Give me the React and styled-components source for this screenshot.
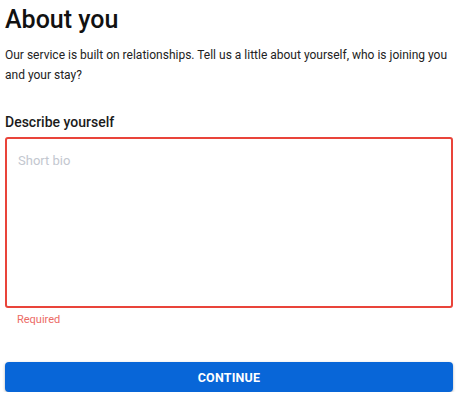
import styled, { createGlobalStyle } from 'styled-components';

const GlobalStyle = createGlobalStyle`
  body {
    margin: 0;
    background: #fff;
    font-family: Roboto, 'Liberation Sans', sans-serif;
  }
`;

function App() {
  return (
    <Wrapper>
      <GlobalStyle />
      <Title>About you</Title>
      <Intro>
        Our service is built on relationships. Tell us a little about yourself, who is joining you
        and your stay?
      </Intro>
      <Field>
        <Label htmlFor="bio">Describe yourself</Label>
        <Bio id="bio" placeholder="Short bio" invalid />
        <ErrorText>Required</ErrorText>
      </Field>
      <ContinueButton type="button">Continue</ContinueButton>
    </Wrapper>
  );
}

const Wrapper = styled.div`
  display: flex;
  flex-direction: column;
  padding: 0 8px 0 5px;
  color: #111;
`;

const Title = styled.h1`
  margin: 4px 0 0;
  font-size: 25px;
  font-weight: 500;
  line-height: 32px;
`;

const Intro = styled.p`
  margin: 9px 0 0;
  font-size: 12px;
  line-height: 20px;
  color: #222;
`;

const Field = styled.div`
  display: flex;
  flex-direction: column;
  margin-top: 28px;
`;

const Label = styled.label`
  font-size: 14px;
  font-weight: 500;
  line-height: 18px;
  color: #1b1b1b;
`;

const Bio = styled.textarea`
  box-sizing: border-box;
  margin-top: 6px;
  height: 171px;
  padding: 14px 11px;
  resize: none;
  border: 2px solid ${(p) => (p.invalid ? '#e9443a' : '#ccc')};
  border-radius: 3px;
  font-family: inherit;
  font-size: 13px;
  outline: none;
  &::placeholder {
    color: #c3c7cf;
  }
`;

const ErrorText = styled.span`
  margin: 5px 0 0 12px;
  font-size: 11px;
  line-height: 14px;
  color: #ec6b66;
`;

const ContinueButton = styled.button`
  margin-top: 35px;
  height: 30px;
  border: none;
  border-radius: 4px;
  background: #0866d8;
  color: #fff;
  font-family: inherit;
  font-size: 12.5px;
  font-weight: 700;
  text-transform: uppercase;
  letter-spacing: 0.2px;
  box-shadow: 0 1px 3px rgba(0, 0, 0, 0.3);
  cursor: pointer;
`;

export default App;
